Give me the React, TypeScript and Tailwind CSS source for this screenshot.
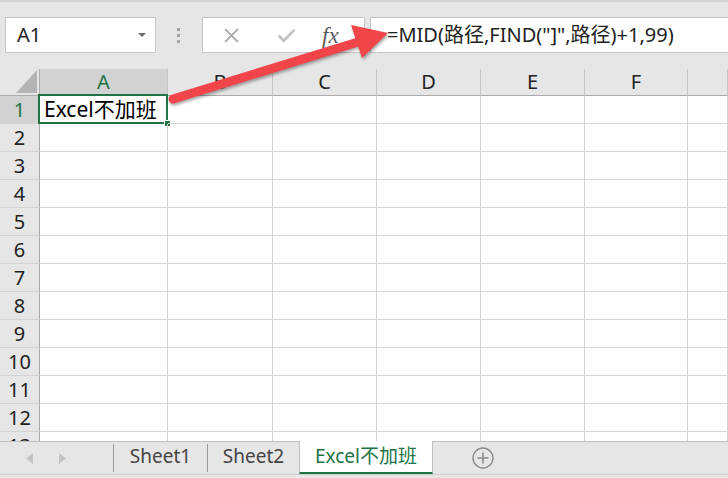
import React from "react";

const cols = [
  { k: "A", w: "w-[128px]" },
  { k: "B", w: "w-[105px]" },
  { k: "C", w: "w-[104px]" },
  { k: "D", w: "w-[104px]" },
  { k: "E", w: "w-[104px]" },
  { k: "F", w: "w-[103px]" },
  { k: "", w: "w-[40px]" },
];
const rows = Array.from({ length: 13 }, (_, i) => i + 1);

function Arrow() {
  return (
    <svg
      className="pointer-events-none absolute left-0 top-0"
      width="728"
      height="478"
      style={{ filter: "drop-shadow(1px 2px 1.5px rgba(0,0,0,0.35))" }}
    >
      <line x1="173" y1="99" x2="358" y2="42" stroke="#f24549" strokeWidth="9" strokeLinecap="round" />
      <polygon points="351,25 388,33 362,58" fill="#f24549" />
    </svg>
  );
}

export default function App() {
  return (
    <div
      className="relative flex h-[478px] w-[728px] flex-col overflow-hidden bg-[#e6e6e6] text-[#222]"
      style={{ fontFamily: "'Noto Sans', 'Noto Sans CJK SC', sans-serif" }}
    >
      {/* top strip */}
      <div className="h-[17px] border-t-2 border-[#d4d4d4]" />

      {/* name box + formula bar */}
      <div className="flex h-[36px]">
        <div className="ml-[5px] flex w-[151px] items-center justify-between border border-[#c6c6c6] bg-white pl-[11px] pr-[9px]">
          <span className="text-[20px] leading-none">A1</span>
          <svg width="8" height="5"><polygon points="0,0 8,0 4,4" fill="#6b6b6b" /></svg>
        </div>
        <div className="flex w-[46px] flex-col items-center justify-center gap-[3px] pr-[2px]">
          <div className="h-[3px] w-[3px] bg-[#a6a6a6]" />
          <div className="h-[3px] w-[3px] bg-[#a6a6a6]" />
          <div className="h-[3px] w-[3px] bg-[#a6a6a6]" />
        </div>
        <div className="flex w-[163px] items-center border border-[#c6c6c6] bg-white">
          <svg className="ml-[20px]" width="17" height="17" viewBox="0 0 16 16">
            <path d="M2 2 L14 14 M14 2 L2 14" stroke="#a9a9a9" strokeWidth="1.8" />
          </svg>
          <svg className="ml-[37px]" width="19" height="15" viewBox="0 0 18 14">
            <path d="M1.5 7 L6.5 12 L16.5 1.5" stroke="#c4c4c4" strokeWidth="2.6" fill="none" />
          </svg>
          <span
            className="ml-[26px] text-[23px] italic leading-none text-[#5a5a5a]"
            style={{ fontFamily: "'Liberation Serif', serif" }}
          >
            fx
          </span>
        </div>
        <div className="ml-[5px] flex flex-1 items-center border-y border-l border-[#c6c6c6] bg-white pl-[16px]">
          <span className="text-[20px] leading-none">=MID(路径,FIND("]",路径)+1,99)</span>
        </div>
      </div>

      <div className="h-[16px]" />

      {/* sheet grid */}
      <div className="flex-1 overflow-hidden bg-white">
        <div className="flex h-[27px] bg-[#e6e6e6]">
          <div className="flex w-[40px] items-end justify-end border-b border-r border-[#ababab] pb-[2px] pr-[2px]">
            <svg width="21" height="23"><polygon points="0,23 21,23 21,0" fill="#b4b4b4" /></svg>
          </div>
          {cols.map((c) => (
            <div
              key={c.k + c.w}
              className={
                c.w +
                " flex items-center justify-center border-r text-[20px] " +
                (c.k === "A"
                  ? "border-b-2 border-r-[#c6c6c6] border-b-[#ababab] bg-[#d2d2d2] text-[#217346]"
                  : "border-b border-r-[#c6c6c6] border-b-[#ababab]")
              }
            >
              {c.k}
            </div>
          ))}
        </div>
        {rows.map((r) => (
          <div key={r} className="flex h-[28px]">
            <div
              className={
                "flex w-[40px] items-center justify-center border-b border-r text-[20px] border-b-[#d4d4d4] border-r-[#ababab] " +
                (r === 1 ? "bg-[#d2d2d2] text-[#217346]" : "bg-[#e6e6e6]")
              }
            >
              {r}
            </div>
            {cols.map((c, j) => (
              <div
                key={j}
                className={c.w + " relative flex items-center border-b border-r border-[#d4d4d4]"}
              >
                {r === 1 && j === 0 && (
                  <>
                    <span className="pl-[4px] text-[21px] leading-none text-black">Excel不加班</span>
                    <div className="absolute -left-[2px] -top-[2px] h-[30px] w-[130px] border-2 border-[#217346]" />
                    <div className="absolute -bottom-[4px] -right-[4px] h-[7px] w-[7px] border border-white bg-[#217346]" />
                  </>
                )}
              </div>
            ))}
          </div>
        ))}
      </div>

      {/* sheet tabs */}
      <div className="flex h-[33px] border-t border-[#c0c0c0] bg-[#e6e6e6] text-[19px]">
        <div className="flex w-[113px] items-center pl-[26px]">
          <svg width="7" height="11"><polygon points="7,0 7,11 0,5.5" fill="#c4c4c4" /></svg>
          <svg className="ml-[26px]" width="7" height="11"><polygon points="0,0 0,11 7,5.5" fill="#c4c4c4" /></svg>
        </div>
        <div className="my-[2px] w-px bg-[#9a9a9a]" />
        <div className="flex w-[93px] items-center justify-center pb-[3px] text-[#444]">Sheet1</div>
        <div className="my-[2px] w-px bg-[#9a9a9a]" />
        <div className="flex w-[91px] items-center justify-center pb-[3px] text-[#444]">Sheet2</div>
        <div className="-mt-px flex w-[134px] items-center justify-center border-x border-b-2 border-x-[#c0c0c0] border-b-[#217346] bg-white pb-[1px] text-[#217346]">
          Excel不加班
        </div>
        <div className="flex items-center pl-[39px]">
          <svg width="22" height="22" viewBox="0 0 22 22">
            <circle cx="11" cy="11" r="10" stroke="#8a8a8a" strokeWidth="1.4" fill="none" />
            <path d="M11 5.5 V16.5 M5.5 11 H16.5" stroke="#8a8a8a" strokeWidth="1.6" />
          </svg>
        </div>
      </div>
      <div className="h-[4px] border-t border-[#cfcfcf] bg-[#e6e6e6]" />

      <Arrow />
    </div>
  );
}
